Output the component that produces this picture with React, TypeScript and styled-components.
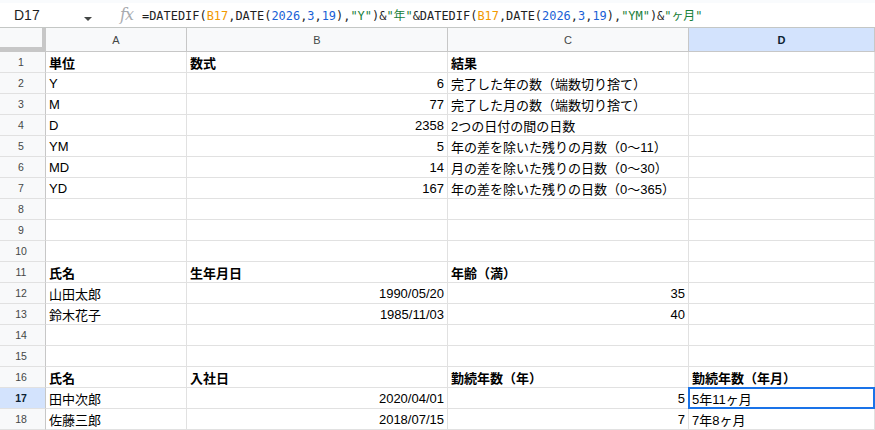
import styled, { createGlobalStyle, css } from "styled-components";

const GlobalStyle = createGlobalStyle`
  html, body {
    margin: 0;
    padding: 0;
    background: #ffffff;
  }
  body {
    font-family: "Liberation Sans", Arial, "Noto Sans CJK JP", sans-serif;
  }
`;

const Page = styled.div`
  width: 875px;
  height: 430px;
  overflow: hidden;
  display: flex;
  flex-direction: column;
  background: #ffffff;
`;

const TopStrip = styled.div`
  height: 3px;
  background: #f9fbfd;
`;

const FormulaBar = styled.div`
  height: 28px;
  display: flex;
  align-items: center;
  border-bottom: 1px solid #c4c7c5;
`;

const NameBox = styled.div`
  width: 100px;
  display: flex;
  align-items: center;
  justify-content: space-between;
  padding: 0 8px 0 14px;
  box-sizing: border-box;
  font: 400 14px "Liberation Sans", Arial, sans-serif;
  color: #1f1f1f;
`;

const Caret = styled.span`
  width: 0;
  height: 0;
  border-left: 4px solid transparent;
  border-right: 4px solid transparent;
  border-top: 4px solid #444746;
  margin-top: 9px;
`;

const FxIcon = styled.span`
  width: 42px;
  box-sizing: border-box;
  padding-right: 9px;
  text-align: right;
  font: italic 400 16px "DejaVu Serif", "Liberation Serif", serif;
  color: #a8abaf;
  letter-spacing: -1px;
`;

const Formula = styled.div`
  font: 400 11.95px "DejaVu Sans Mono", "Liberation Mono", "Noto Sans CJK JP",
    monospace;
  color: #1f1f1f;
  white-space: nowrap;
`;

const Tok = styled.span<{ $kind: "ref" | "num" | "str" }>`
  color: ${(p) =>
    p.$kind === "ref" ? "#f29900" : p.$kind === "num" ? "#1a5fd6" : "#188038"};
`;

const Sheet = styled.div`
  display: grid;
  grid-template-columns: 46px 141px 261px 241px 1fr;
  grid-template-rows: 24px;
  grid-auto-rows: 21px;
`;

const Corner = styled.div`
  background: #f8f9fa;
  border-right: 4px solid #c7c7c7;
  border-bottom: 5px solid #c7c7c7;
`;

const ColHead = styled.div<{ $active?: boolean }>`
  display: flex;
  align-items: center;
  justify-content: center;
  background: ${(p) => (p.$active ? "#d3e3fd" : "#f8f9fa")};
  border-right: 1px solid #c7c7c7;
  border-bottom: 1px solid #c7c7c7;
  font: ${(p) => (p.$active ? 700 : 400)} 11px "Liberation Sans", Arial,
    sans-serif;
  color: ${(p) => (p.$active ? "#0b1f33" : "#444746")};
`;

const RowHead = styled.div<{ $active?: boolean }>`
  display: flex;
  align-items: center;
  justify-content: center;
  background: ${(p) => (p.$active ? "#d3e3fd" : "#f8f9fa")};
  border-right: 1px solid #c7c7c7;
  border-bottom: 1px solid #e1e1e1;
  padding-right: 3px;
  font: ${(p) => (p.$active ? 700 : 400)} 10.5px "Liberation Sans", Arial,
    sans-serif;
  color: ${(p) => (p.$active ? "#0b1f33" : "#444746")};
`;

const Cell = styled.div<{ $right?: boolean; $bold?: boolean; $selected?: boolean }>`
  position: relative;
  display: flex;
  align-items: center;
  justify-content: ${(p) => (p.$right ? "flex-end" : "flex-start")};
  padding: 1px 3px 0;
  border-right: 1px solid #e1e1e1;
  border-bottom: 1px solid #e1e1e1;
  font: ${(p) => (p.$bold ? 700 : 400)} 13px "Liberation Sans", Arial,
    "Noto Sans CJK JP", sans-serif;
  color: #000000;
  white-space: nowrap;
  overflow: hidden;
  ${(p) =>
    p.$selected &&
    css`
      overflow: visible;
      &::after {
        content: "";
        position: absolute;
        left: -1px;
        top: -1px;
        right: -1px;
        bottom: -1px;
        border: 2px solid #1a73e8;
      }
    `}
`;

type CellData = string | { v: string; right?: boolean };

const rows: { cells: CellData[]; bold?: boolean }[] = [
  { cells: ["単位", "数式", "結果", ""], bold: true },
  { cells: ["Y", { v: "6", right: true }, "完了した年の数（端数切り捨て）", ""] },
  { cells: ["M", { v: "77", right: true }, "完了した月の数（端数切り捨て）", ""] },
  { cells: ["D", { v: "2358", right: true }, "2つの日付の間の日数", ""] },
  { cells: ["YM", { v: "5", right: true }, "年の差を除いた残りの月数（0〜11）", ""] },
  { cells: ["MD", { v: "14", right: true }, "月の差を除いた残りの日数（0〜30）", ""] },
  { cells: ["YD", { v: "167", right: true }, "年の差を除いた残りの日数（0〜365）", ""] },
  { cells: ["", "", "", ""] },
  { cells: ["", "", "", ""] },
  { cells: ["", "", "", ""] },
  { cells: ["氏名", "生年月日", "年齢（満）", ""], bold: true },
  { cells: ["山田太郎", { v: "1990/05/20", right: true }, { v: "35", right: true }, ""] },
  { cells: ["鈴木花子", { v: "1985/11/03", right: true }, { v: "40", right: true }, ""] },
  { cells: ["", "", "", ""] },
  { cells: ["", "", "", ""] },
  { cells: ["氏名", "入社日", "勤続年数（年）", "勤続年数（年月）"], bold: true },
  { cells: ["田中次郎", { v: "2020/04/01", right: true }, { v: "5", right: true }, "5年11ヶ月"] },
  { cells: ["佐藤三郎", { v: "2018/07/15", right: true }, { v: "7", right: true }, "7年8ヶ月"] },
];

const columns = ["A", "B", "C", "D"];
const activeCol = 3;
const activeRow = 17;

export default function App() {
  return (
    <>
      <GlobalStyle />
      <Page>
        <TopStrip />
        <FormulaBar>
          <NameBox>
            D17
            <Caret />
          </NameBox>
          <FxIcon>fx</FxIcon>
          <Formula>
            =DATEDIF(<Tok $kind="ref">B17</Tok>,DATE(<Tok $kind="num">2026</Tok>,
            <Tok $kind="num">3</Tok>,<Tok $kind="num">19</Tok>),
            <Tok $kind="str">"Y"</Tok>)&amp;<Tok $kind="str">"年"</Tok>&amp;DATEDIF(
            <Tok $kind="ref">B17</Tok>,DATE(<Tok $kind="num">2026</Tok>,
            <Tok $kind="num">3</Tok>,<Tok $kind="num">19</Tok>),
            <Tok $kind="str">"YM"</Tok>)&amp;<Tok $kind="str">"ヶ月"</Tok>
          </Formula>
        </FormulaBar>
        <Sheet>
          <Corner />
          {columns.map((c, i) => (
            <ColHead key={c} $active={i === activeCol}>
              {c}
            </ColHead>
          ))}
          {rows.map((row, r) => {
            const n = r + 1;
            return [
              <RowHead key={`h${n}`} $active={n === activeRow}>
                {n}
              </RowHead>,
              ...row.cells.map((cell, i) => {
                const v = typeof cell === "string" ? cell : cell.v;
                const right = typeof cell === "string" ? false : cell.right;
                return (
                  <Cell
                    key={`${n}-${i}`}
                    $right={right}
                    $bold={row.bold}
                    $selected={n === activeRow && i === activeCol}
                  >
                    {v}
                  </Cell>
                );
              }),
            ];
          })}
        </Sheet>
      </Page>
    </>
  );
}
